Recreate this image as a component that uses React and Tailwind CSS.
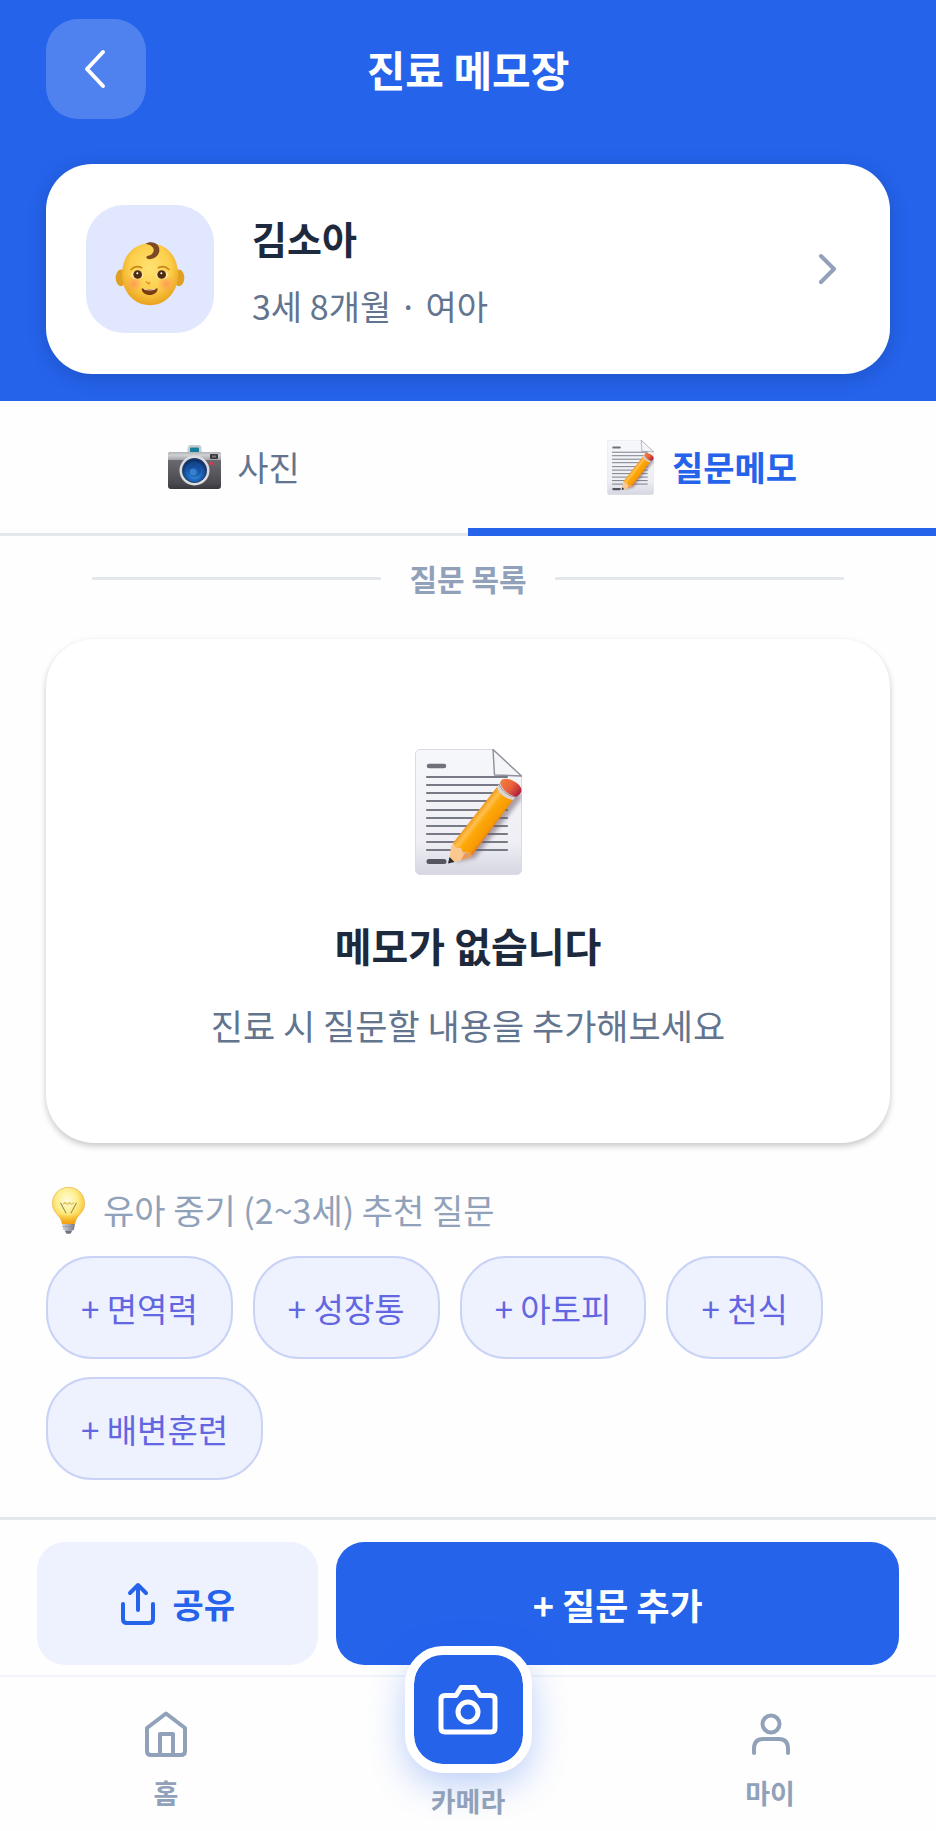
import { useState } from "react"

const MEMO_LINES = [28, 36, 44, 52, 61, 69, 77, 85, 93, 101]

const SUGGESTIONS = ["면역력", "성장통", "아토피", "천식", "배변훈련"]

const MemoIcon = ({ className, id }) => (
  <svg viewBox="0 0 107 126" className={className} aria-hidden="true">
    <defs>
      <linearGradient id={`${id}-paper`} x1="0" y1="0" x2="0" y2="1">
        <stop offset="0" stopColor="#f7f8fb" />
        <stop offset="0.75" stopColor="#eeeef4" />
        <stop offset="1" stopColor="#d5d6e0" />
      </linearGradient>
      <linearGradient id={`${id}-body`} x1="60" y1="66" x2="79" y2="81" gradientUnits="userSpaceOnUse">
        <stop offset="0" stopColor="#f29a1c" />
        <stop offset="0.2" stopColor="#ffc04d" />
        <stop offset="0.4" stopColor="#fda80a" />
        <stop offset="0.8" stopColor="#f79a02" />
        <stop offset="1" stopColor="#d9663f" />
      </linearGradient>
      <linearGradient id={`${id}-eraser`} x1="84" y1="30" x2="105" y2="46" gradientUnits="userSpaceOnUse">
        <stop offset="0" stopColor="#f5843f" />
        <stop offset="0.55" stopColor="#e8603a" />
        <stop offset="1" stopColor="#a8173f" />
      </linearGradient>
      <filter id={`${id}-shade`} x="-20%" y="-20%" width="140%" height="140%">
        <feGaussianBlur stdDeviation="2" />
      </filter>
    </defs>
    <path d="M5 .5H78L106.500 27V121a4.500 4.500 0 0 1-4.500 4.500H5A4.500 4.500 0 0 1 .5 121V5A4.500 4.500 0 0 1 5 .5Z" fill={`url(#${id}-paper)`} stroke="#d9dae3" />
    <path d="M78 .5 79.500 26 106.500 27Z" fill="#f4f5f9" stroke="#8d8f9b" strokeWidth="1.400" strokeLinejoin="round" />
    <path d="M14 17H29" stroke="#70717d" strokeWidth="4.500" strokeLinecap="round" />
    {MEMO_LINES.map((y) => (
      <path key={y} d={`M12 ${y}H92`} stroke="#777985" strokeWidth="2.200" strokeLinecap="round" />
    ))}
    <path d="M14 112.500H29" stroke="#55565f" strokeWidth="5" strokeLinecap="round" />
    <path d="M40 113 60 109 106 50V44L92 40Z" fill="#6d5a66" opacity="0.55" filter={`url(#${id}-shade)`} />
    <path d="M82 38 38 94 40 100 50 103 56 108 98 51Z" fill={`url(#${id}-body)`} />
    <path d="M38 93 36 98 34 112 38 113.500 54 109 57 107 53 103 48 104 46 99 41 99Z" fill="#fbc98f" />
    <path d="M46 111.300 54 109 57 107 53 103 49 105Z" fill="#e79a5e" />
    <path d="M34.500 108 33 114.500 39.500 113Z" fill="#2d2c33" />
    <path d="M86 32 82 38C84 45 91 50 98 51L102 46Z" fill="#dcd5d6" />
    <path d="M84 35C87 42 93 47 100 48" stroke="#9c8f93" strokeWidth="1" fill="none" />
    <path d="M86 32C88 26 106 33 106.500 41 106.500 44 104 46 101 48 94 46 88 42 85 34Z" fill={`url(#${id}-eraser)`} />
  </svg>
)

const PhotoIcon = () => (
  <svg viewBox="0 0 53 44" className="w-[53px] h-11" aria-hidden="true">
    <defs>
      <linearGradient id="photo-body" x1="0" y1="0" x2="0" y2="1">
        <stop offset="0" stopColor="#77767d" />
        <stop offset="0.3" stopColor="#66656b" />
        <stop offset="0.85" stopColor="#4a494f" />
        <stop offset="1" stopColor="#38373d" />
      </linearGradient>
      <linearGradient id="photo-top" x1="0" y1="0" x2="0" y2="1">
        <stop offset="0" stopColor="#b0b1b5" />
        <stop offset="0.4" stopColor="#d0d1d4" />
        <stop offset="1" stopColor="#a2a3a8" />
      </linearGradient>
      <radialGradient id="photo-lens" cx="0.5" cy="0.65" r="0.6">
        <stop offset="0" stopColor="#3f9fe8" />
        <stop offset="0.5" stopColor="#1c66bd" />
        <stop offset="1" stopColor="#0e2f68" />
      </radialGradient>
    </defs>
    <path d="M19 8 20 1.500Q20.200 0 22 0H31Q33 0 33.200 1.500L34 8Z" fill="#c7ccd0" />
    <rect x="22" y="2.500" width="9" height="5" rx="1" fill="#167f99" />
    <rect y="7" width="53" height="37" rx="3" fill="url(#photo-body)" />
    <path d="M3 7H50Q53 7 53 10V15H0V10Q0 7 3 7Z" fill="url(#photo-top)" />
    <rect x="42" y="9" width="8" height="5" rx="1" fill="#3a393f" />
    <rect x="44" y="10.500" width="4" height="2" fill="#77787e" />
    <circle cx="43.500" cy="18.500" r="1.800" fill="#d9384a" />
    <circle cx="26.500" cy="25.500" r="15" fill="#dcdde2" />
    <circle cx="26.500" cy="25.500" r="12.500" fill="#274066" />
    <circle cx="26.500" cy="25.500" r="11.500" fill="url(#photo-lens)" />
    <circle cx="26.500" cy="25.500" r="6.500" fill="#0d3c85" opacity="0.5" />
    <circle cx="25" cy="27" r="3.500" fill="#3f8fe0" opacity="0.7" />
  </svg>
)

const BabyIcon = () => (
  <svg viewBox="45 36 210 194" className="w-[70px] h-[65px]" aria-hidden="true">
    <defs>
      <radialGradient id="baby-face" cx="0.5" cy="0.4" r="0.6">
        <stop offset="0" stopColor="#ffe274" />
        <stop offset="0.6" stopColor="#fdcf4b" />
        <stop offset="1" stopColor="#e9a21d" />
      </radialGradient>
      <radialGradient id="baby-cheek">
        <stop offset="0" stopColor="#ff8f5a" stopOpacity="0.8" />
        <stop offset="1" stopColor="#ffa04f" stopOpacity="0" />
      </radialGradient>
    </defs>
    <ellipse cx="63" cy="146" rx="16" ry="25" fill="#e0a021" />
    <ellipse cx="237" cy="146" rx="16" ry="25" fill="#e0a021" />
    <path d="M150 42C200 42 234 82 234 136 234 190 196 228 150 228S66 190 66 136C66 82 100 42 150 42Z" fill="url(#baby-face)" />
    <circle cx="102" cy="164" r="27" fill="url(#baby-cheek)" />
    <circle cx="198" cy="164" r="27" fill="url(#baby-cheek)" />
    <path d="M136 44C148 36 168 38 176 52 184 72 168 90 148 90 138 90 136 82 144 80 158 78 166 64 158 54 152 47 144 46 136 44Z" fill="#7c4a22" />
    <path d="M93 121Q107 107 125 116M207 121Q193 107 175 116" stroke="#c9861e" strokeWidth="5" strokeLinecap="round" fill="none" />
    <ellipse cx="112" cy="137" rx="19" ry="13" fill="#fbe3a0" />
    <ellipse cx="186" cy="137" rx="19" ry="13" fill="#fbe3a0" />
    <circle cx="113" cy="136" r="13" fill="#4d2c12" />
    <circle cx="185" cy="136" r="13" fill="#4d2c12" />
    <circle cx="112" cy="132" r="3" fill="#fff" />
    <circle cx="184" cy="132" r="3" fill="#fff" />
    <path d="M138 158 146 164 149 160" stroke="#e28b22" strokeWidth="4" strokeLinecap="round" fill="none" />
    <path d="M125 177Q148 184 173 177C174 204 124 204 125 177Z" fill="#7a3d12" />
    <path d="M131 178Q148 184 167 178L165 182Q148 186 133 182Z" fill="#f6dcc0" />
  </svg>
)

const BulbIcon = () => (
  <svg viewBox="160 80 98 140" className="w-[33px] h-[47px]" aria-hidden="true">
    <defs>
      <radialGradient id="bulb-glass" cx="0.45" cy="0.35" r="0.65">
        <stop offset="0" stopColor="#fffbd8" />
        <stop offset="0.5" stopColor="#fdee8c" />
        <stop offset="0.8" stopColor="#fad048" />
        <stop offset="1" stopColor="#f0a42a" />
      </radialGradient>
      <linearGradient id="bulb-neck" x1="0" y1="0" x2="0" y2="1">
        <stop offset="0" stopColor="#f9b51f" stopOpacity="0" />
        <stop offset="1" stopColor="#f29c10" />
      </linearGradient>
      <linearGradient id="bulb-base" x1="0" y1="0" x2="1" y2="0">
        <stop offset="0" stopColor="#d5d6de" />
        <stop offset="1" stopColor="#767985" />
      </linearGradient>
    </defs>
    <path d="M209 81C236 81 257 102 257 129 257 154 238 162 231 178L227 192H191L187 178C180 162 161 154 161 129 161 102 182 81 209 81Z" fill="url(#bulb-glass)" stroke="#ecb048" strokeWidth="2" />
    <path d="M175 158Q209 170 243 158L231 178 227 192H191L187 178Z" fill="url(#bulb-neck)" />
    <path d="M185 127 202 158M233 127 216 158" stroke="#93884e" strokeWidth="3" fill="none" />
    <path d="M192 132 199 126 206 132 212 126 218 132 226 126" stroke="#d9c25c" strokeWidth="3" fill="none" />
    <path d="M190 190H228L225 208Q209 214 193 208Z" fill="url(#bulb-base)" />
    <path d="M191 198H227" stroke="#8d909b" strokeWidth="2" />
    <path d="M198 210H220L215 219H203Z" fill="#71747f" />
  </svg>
)

const Chevron = ({ d, className }) => (
  <svg viewBox="0 0 46 46" className={className} fill="none" stroke="currentColor" strokeWidth="4" strokeLinecap="round" strokeLinejoin="round" aria-hidden="true">
    <path d={d} />
  </svg>
)

const ShareIcon = () => (
  <svg viewBox="0 0 36 44" className="w-9 h-11" fill="none" stroke="currentColor" strokeWidth="4" strokeLinecap="round" strokeLinejoin="round" aria-hidden="true">
    <path d="M18 28V3M10 11 18 3 26 11M3 22V37Q3 41 7 41H29Q33 41 33 37V22" />
  </svg>
)

const HomeIcon = () => (
  <svg viewBox="0 0 46 46" className="size-[46px]" fill="none" stroke="currentColor" strokeWidth="4" strokeLinecap="round" strokeLinejoin="round" aria-hidden="true">
    <path d="M4 17 23 2.500 42 17V40Q42 44 38 44H8Q4 44 4 40ZM17 43V23H30V43" />
  </svg>
)

const UserIcon = () => (
  <svg viewBox="0 0 46 46" className="size-[46px]" fill="none" stroke="currentColor" strokeWidth="4" strokeLinecap="round" aria-hidden="true">
    <circle cx="24" cy="13" r="8.500" />
    <path d="M7 42V38Q7 28 16 28H32Q41 28 41 38V42" />
  </svg>
)

const CameraIcon = () => (
  <svg viewBox="0 0 60 50" className="w-[60px] h-[50px]" fill="none" stroke="currentColor" strokeWidth="5" strokeLinejoin="round" aria-hidden="true">
    <path d="M7 10.500H18L23 2.500H37L42 10.500H53Q57 10.500 57 14.500V43Q57 47 53 47H7Q3 47 3 43V14.500Q3 10.500 7 10.500Z" />
    <circle cx="30" cy="27" r="10" />
  </svg>
)

const App = () => {
  const [tab, setTab] = useState("memo")

  const tabClass = (key) =>
    tab === key
      ? "flex items-center justify-center gap-[18px] border-b-[3px] border-[#2563eb] shadow-[inset_0_-5px_0_#2563eb] text-[#2563eb] font-bold"
      : "flex items-center justify-center gap-4 border-b-[3px] border-[#e5e7ee] text-slate-500"

  return (
    <div className="min-h-screen flex flex-col bg-[#fefefe] font-['Noto_Sans_CJK_KR',sans-serif]">
      <header className="bg-[#2563eb] px-[46px] pt-[19px] pb-[27px]">
        <div className="grid grid-cols-[100px_1fr_100px] items-center">
          <button type="button" aria-label="뒤로" className="size-[100px] rounded-[32px] bg-white/20 text-white flex items-center justify-center">
            <Chevron d="M30 6 14 23 30 40" className="size-[46px]" />
          </button>
          <h1 className="text-center text-[42px] leading-[60px] font-bold text-white">진료 메모장</h1>
        </div>

        <button type="button" className="mt-[45px] w-full h-[210px] px-10 flex items-center gap-[38px] text-left bg-white rounded-[46px] shadow-[0_4px_20px_rgba(0,0,0,0.16)]">
          <span className="size-32 shrink-0 rounded-[38px] bg-indigo-100 flex items-center justify-center pt-2">
            <BabyIcon />
          </span>
          <span className="flex-1 flex flex-col pt-[6px]">
            <span className="text-[38px] leading-[68px] font-bold text-slate-800">김소아</span>
            <span className="text-[34px] leading-[68px] text-slate-500">3세 8개월 · 여아</span>
          </span>
          <Chevron d="M17 10 30 23 17 36" className="size-[46px] text-slate-400" />
        </button>
      </header>

      <div className="grid grid-cols-2 h-[135px] text-[34px] leading-[50px]">
        <button type="button" className={tabClass("photo")} onClick={() => setTab("photo")}>
          <PhotoIcon />
          사진
        </button>
        <button type="button" className={tabClass("memo")} onClick={() => setTab("memo")}>
          <MemoIcon id="memo-tab" className="w-[47px] h-[55px]" />
          질문메모
        </button>
      </div>

      <main className="flex-1 px-[46px] pt-5 pb-9">
        <div className="flex items-center gap-7 px-[46px]">
          <span className="flex-1 h-[3px] bg-[#e5e7ee]" />
          <h2 className="text-[30px] leading-[44px] font-bold text-slate-400">질문 목록</h2>
          <span className="flex-1 h-[3px] bg-[#e5e7ee]" />
        </div>

        <section className="mt-[39px] pt-[110px] pb-[88px] flex flex-col items-center rounded-[48px] bg-white shadow-[0_3px_6px_rgba(0,0,0,0.22)]">
          <MemoIcon id="memo-empty" className="w-[107px] h-[126px]" />
          <p className="mt-10 text-[40px] leading-[60px] font-bold text-slate-800">메모가 없습니다</p>
          <p className="mt-5 text-[35px] leading-[60px] text-slate-500">진료 시 질문할 내용을 추가해보세요</p>
        </section>

        <div className="mt-[43px] h-12 flex items-center gap-[18px] px-[6px] text-[34px] leading-[48px] text-slate-400">
          <BulbIcon />
          <p>유아 중기 (2~3세) 추천 질문</p>
        </div>

        <div className="mt-[22px] flex flex-wrap gap-x-5 gap-y-[18px]">
          {SUGGESTIONS.map((label) => (
            <button
              key={label}
              type="button"
              className="h-[103px] px-[33px] rounded-[46px] border-2 border-[#c9d3f5] bg-[#eef2ff] text-[33px] leading-[48px] text-[#6366e1]"
            >
              + {label}
            </button>
          ))}
        </div>
      </main>

      <div className="flex gap-[18px] px-[37px] pt-[22px] pb-[10px] border-t-[3px] border-[#e5e7ee]">
        <button type="button" className="flex-1 h-[123px] rounded-[28px] bg-[#eef2ff] text-[#2563eb] text-[34px] leading-[50px] font-bold flex items-center justify-center gap-4">
          <ShareIcon />
          공유
        </button>
        <button type="button" className="flex-2 h-[123px] rounded-[28px] bg-[#2563eb] text-white text-[36px] leading-[50px] font-bold">
          + 질문 추가
        </button>
      </div>

      <nav className="grid grid-cols-3 px-[15px] pb-[10px] border-t-2 border-slate-100 text-[27px] leading-[40px] font-bold text-slate-400">
        <a href="#home" className="flex flex-col items-center gap-4 pt-[34px]">
          <HomeIcon />
          홈
        </a>
        <a href="#camera" className="-mt-[31px] flex flex-col items-center gap-2">
          <span className="size-[127px] rounded-[38px] border-9 border-white bg-[#2563eb] bg-clip-padding text-white flex items-center justify-center shadow-[0_12px_36px_rgba(37,99,235,0.3)]">
            <CameraIcon />
          </span>
          카메라
        </a>
        <a href="#my" className="flex flex-col items-center gap-4 pt-[34px]">
          <UserIcon />
          마이
        </a>
      </nav>
    </div>
  )
}

export default App
